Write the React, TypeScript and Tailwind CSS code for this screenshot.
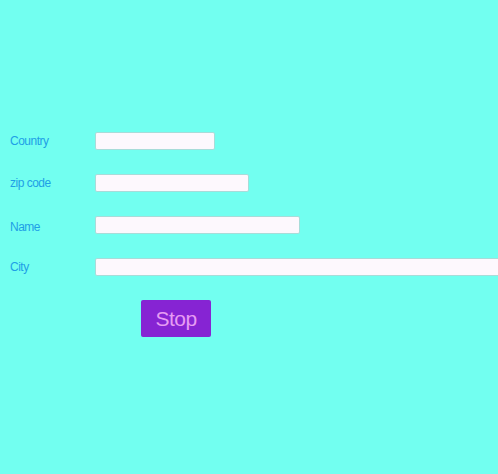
import React from "react";

const rows: { label: string; w: string; off: string }[] = [
  { label: "Country", w: "w-[120px]", off: "" },
  { label: "zip code", w: "w-[154px]", off: "" },
  { label: "Name", w: "w-[205px]", off: "translate-y-[2px]" },
  { label: "City", w: "w-[410px]", off: "" },
];

export default function App() {
  return (
    <div
      className="w-[498px] h-[474px] bg-[#72fff0] overflow-hidden pt-[132px]"
      style={{ fontFamily: '"Liberation Sans", Arial, sans-serif' }}
    >
      <div className="flex flex-col gap-[24px]">
        {rows.map((r) => (
          <div key={r.label} className="flex items-center h-[18px]">
            <div
              className={`w-[95px] pl-[10px] text-[12px] tracking-[-0.5px] text-[#1ea0e6] shrink-0 ${r.off}`}
            >
              {r.label}
            </div>
            <div
              className={`${r.w} h-[18px] shrink-0 bg-[#fdf8fd] border border-[#a8dcd9] rounded-[2px]`}
            />
          </div>
        ))}
        <div className="pl-[141px]">
          <button className="w-[70px] h-[37px] bg-[#8624d3] rounded-[2px] text-[21px] tracking-[-0.5px] text-[#e69cf3] flex items-center justify-center">
            Stop
          </button>
        </div>
      </div>
    </div>
  );
}
